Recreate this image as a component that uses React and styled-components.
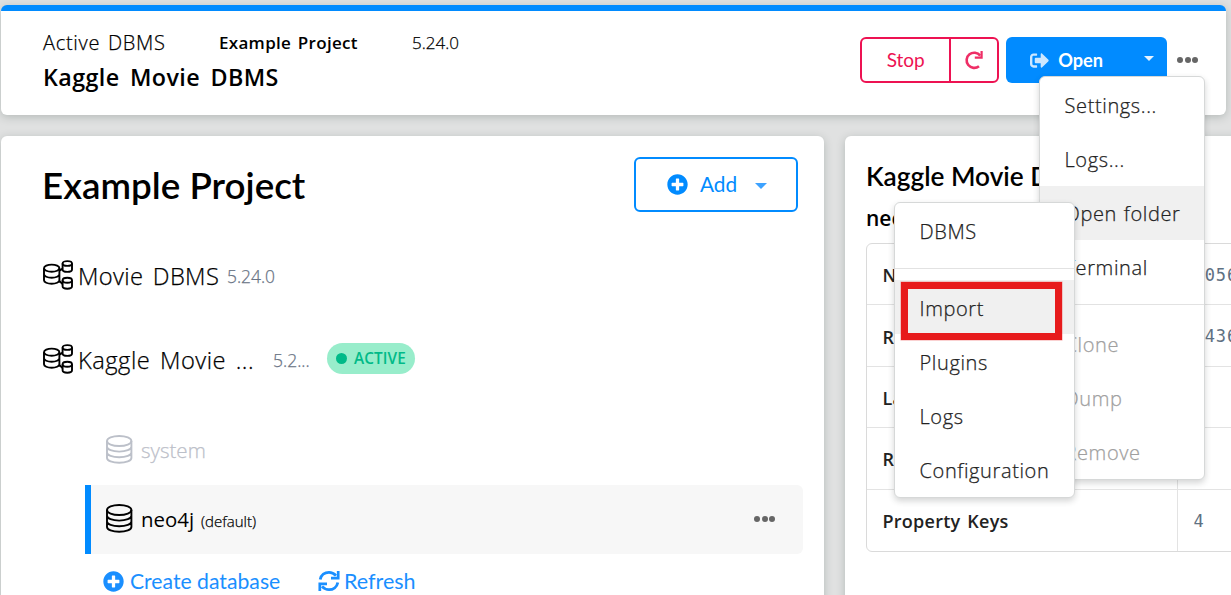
import React from "react";
import styled, { createGlobalStyle } from "styled-components";
import { FaPlusCircle, FaSignOutAlt } from "react-icons/fa";

const Global = createGlobalStyle`
  * { box-sizing: border-box; }
  body { margin: 0; background: #e0e1e1; overflow: hidden; font-family: "Open Sans", "Noto Sans", sans-serif; color: #000; }
`;

const Page = styled.div`
  position: relative;
  width: 1231px;
  height: 595px;
  padding: 5px 0 0 1px;
  overflow: hidden;
`;

const Text = styled.span`
  display: block;
  white-space: nowrap;
  font-family: ${(p) => (p.$lato ? '"Lato", sans-serif' : "inherit")};
  font-size: ${(p) => p.$size}px;
  font-weight: ${(p) => p.$weight || 300};
  -webkit-text-stroke: ${(p) => (p.$weight ? 0 : 0.25)}px currentColor;
  line-height: ${(p) => p.$lh || 30}px;
  letter-spacing: ${(p) => p.$ls || 0}px;
  word-spacing: ${(p) => p.$ws || 0}px;
  color: ${(p) => p.$color || "inherit"};
`;

const Header = styled.header`
  display: flex;
  justify-content: space-between;
  width: 1225px;
  height: 110px;
  padding: 22px 28px 0 42px;
  border-top: 6px solid #018bff;
  border-radius: 6px;
  background: #fff;
  box-shadow: 0 2px 8px rgba(50, 70, 65, 0.25);
`;

const Titles = styled.div`
  display: flex;
  flex-direction: column;
  gap: 5px;
  margin-top: -5px;
`;

const TitleRow = styled.div`
  display: grid;
  grid-template-columns: 176px 193px auto;
  align-items: center;
  height: 19px;
`;

const Actions = styled.div`
  display: flex;
  height: 46px;
  margin-top: 4px;
`;

const StopGroup = styled.div`
  display: flex;
  width: 139px;
  border: 2px solid #ed1252;
  border-radius: 6px;
  color: #ed1252;
`;

const StopButton = styled.div`
  display: flex;
  align-items: center;
  justify-content: center;
  width: ${(p) => p.$width}px;
  border-right: ${(p) => (p.$divided ? "2px solid #ed1252" : "0")};
`;

const OpenButton = styled.div`
  display: flex;
  align-items: center;
  width: 161px;
  margin-left: 7px;
  padding: 0 13px 0 24px;
  border-radius: 6px;
  background: #018bff;
  color: #fff;
  svg { opacity: 0.8; margin-right: 9px; }
`;

const Caret = styled.i`
  width: 0;
  height: 0;
  margin-left: auto;
  margin-top: ${(p) => p.$shift || 0}px;
  border: ${(p) => p.$size || 6}px solid transparent;
  border-top-color: ${(p) => p.$color};
  border-bottom: 0;
`;

const Dots = styled.div`
  display: flex;
  align-items: center;
  gap: 1.4px;
  margin-left: ${(p) => p.$left || 0}px;
  i { width: 6px; height: 6px; border-radius: 50%; background: #666; }
`;

const Columns = styled.main`
  display: flex;
  gap: 21px;
  margin-top: 21px;
`;

const Card = styled.section`
  flex: none;
  width: ${(p) => p.$width}px;
  height: 480px;
  padding: ${(p) => p.$pad};
  border-radius: 6px;
  background: #fff;
  box-shadow: 0 2px 8px rgba(50, 70, 65, 0.25);
`;

const ProjectHead = styled.div`
  display: flex;
  justify-content: space-between;
  height: 55px;
  margin-left: -1px;
`;

const AddButton = styled.div`
  display: flex;
  align-items: center;
  width: 164px;
  padding: 0 29px 1px 31px;
  border: 2px solid #018bff;
  border-radius: 6px;
  color: #018bff;
  svg { margin-right: 12px; }
`;

const DbmsRow = styled.div`
  display: flex;
  align-items: center;
  gap: 5px;
  height: 32px;
  margin-top: ${(p) => p.$top}px;
  svg { flex: none; }
`;

const DbmsName = styled.div`
  width: ${(p) => p.$width}px;
  padding-top: 2px;
`;

const Version = styled.div`
  width: ${(p) => p.$width}px;
  padding-top: 2px;
  color: #6a7485;
`;

const Badge = styled.div`
  display: flex;
  align-items: center;
  gap: 7px;
  width: 88px;
  height: 31px;
  margin-bottom: 2px;
  padding-left: 9px;
  border-radius: 16px;
  background: #98edcb;
  color: #00ba88;
  &::before { content: ""; width: 11px; height: 11px; border-radius: 50%; background: #00ba88; }
`;

const DatabaseRow = styled.div`
  display: flex;
  align-items: center;
  width: 718px;
  height: 69px;
  margin-left: 42px;
  margin-top: ${(p) => p.$top || 0}px;
  padding: 0 28px 1px 15px;
  border-left: 6px solid ${(p) => (p.$active ? "#018bff" : "transparent")};
  border-radius: 0 6px 6px 0;
  background: ${(p) => (p.$active ? "#f7f7f7" : "transparent")};
  color: ${(p) => (p.$active ? "#000" : "#bcc0c9")};
  svg { flex: none; margin: 0 8px 2px 0; }
`;

const Default = styled.div`
  margin: 4px auto 0 7px;
`;

const Links = styled.div`
  display: flex;
  align-items: center;
  height: 30px;
  margin: 12px 0 0 60px;
  color: #1a8fff;
`;

const Link = styled.div`
  display: flex;
  align-items: center;
  gap: ${(p) => p.$gap}px;
  width: ${(p) => p.$width}px;
`;

const DatabaseName = styled.div`
  height: 38px;
`;

const Table = styled.div`
  display: grid;
  grid-template-columns: 311px 1fr;
  width: 500px;
  margin-top: 9px;
  border: 1px solid #dadada;
  border-radius: 6px;
`;

const Cell = styled.div`
  display: flex;
  align-items: center;
  height: 61.4px;
  padding-left: 15.5px;
  padding-top: ${(p) => (p.$label ? 2 : 1)}px;
  border-bottom: ${(p) => (p.$last ? "0" : "1px solid #e3e3e3")};
  border-right: ${(p) => (p.$label ? "1px solid #e3e3e3" : "0")};
  color: ${(p) => (p.$label ? "#222" : "#5f7183")};
`;

const Value = styled.span`
  font: 400 17px/24px "DejaVu Sans Mono", monospace;
  letter-spacing: 0.9px;
`;

const Menu = styled.nav`
  position: absolute;
  left: ${(p) => p.$x}px;
  top: ${(p) => p.$y}px;
  width: ${(p) => p.$w}px;
  padding: 1px 0 ${(p) => p.$bottom || 0}px;
  border: 1px solid #d6d8d8;
  border-radius: 6px;
  background: #fff;
  box-shadow: 0 3px 6px rgba(40, 45, 45, 0.2);
`;

const Item = styled.div`
  display: flex;
  align-items: center;
  height: 54px;
  padding-left: 24.5px;
  padding-top: ${(p) => (p.$low ? 4 : 2)}px;
  background: ${(p) => (p.$hover ? "#f0f0f0" : "transparent")};
  color: ${(p) => (p.$disabled ? "#a0a0a0" : "#222")};
`;

const Separator = styled.div`
  height: ${(p) => p.$h}px;
  padding-top: 10px;
  &::before { content: ""; display: block; height: 1px; background: #e2e2e2; }
`;

const Highlight = styled.div`
  position: absolute;
  left: 901px;
  top: 282px;
  width: 161px;
  height: 58px;
  border: 7px solid #e71b1c;
  box-shadow: 0 0 0 0.5px rgba(231, 27, 28, 0.4);
`;

const ClusterIcon = () => (
  <svg width="30" height="30" viewBox="0 0 30 30" fill="none" stroke="#000" strokeWidth="1.9">
    <ellipse cx="8.7" cy="8.2" rx="7.7" ry="3.6" />
    <path d="M1 8.2v12c0 2 3.4 3.6 7.7 3.6s7.7-1.6 7.7-3.6v-12M1 14.2c0 2 3.4 3.6 7.7 3.6s7.7-1.6 7.7-3.6M16.4 11l3.2-2.6M16.4 21l3.2 3" />
    <ellipse cx="24.3" cy="3.5" rx="4.7" ry="2.4" />
    <path d="M19.6 3.5v6c0 1.4 2.1 2.4 4.7 2.4s4.7-1 4.7-2.4v-6" />
    <ellipse cx="24.3" cy="20.3" rx="4.7" ry="2.5" />
    <path d="M19.6 20.3v6c0 1.4 2.1 2.4 4.7 2.4s4.7-1 4.7-2.4v-6" />
  </svg>
);

const DatabaseIcon = () => (
  <svg width="27" height="29" viewBox="0 0 27 29" fill="none" stroke="currentColor" strokeWidth="1.9">
    <ellipse cx="13.2" cy="6" rx="12.2" ry="5" />
    <path d="M1 6v17c0 2.7 5.4 4.8 12.2 4.8s12.2-2.1 12.2-4.8V6M1 11.8c0 2.7 5.4 4.8 12.2 4.8s12.2-2.1 12.2-4.8M1 17.4c0 2.7 5.4 4.8 12.2 4.8s12.2-2.1 12.2-4.8" />
  </svg>
);

const RestartIcon = () => (
  <svg width="20" height="20" viewBox="0 0 20 20" fill="none" stroke="#ed1252" strokeWidth="2.6" opacity="0.88">
    <path d="M15 16.2A7.6 7.6 0 1 1 16.2 5.6" />
    <path d="M17.6 1v6.6h-6.8" strokeWidth="2.2" />
  </svg>
);

const RefreshIcon = () => (
  <svg width="22" height="22" viewBox="0 0 22 22" fill="none" stroke="currentColor" strokeWidth="2.8">
    <path d="M2.2 9.5C3 5 6.8 2.3 11 2.3c2.6 0 5 1.1 7 3.3" />
    <path d="M19.8 12.5C19 17 15.2 19.7 11 19.7c-2.6 0-5-1.1-7-3.3" />
    <path d="M20.2 1v7.2H13M1.8 21v-7.2H9" strokeWidth="2.7" />
  </svg>
);

const More = ({ left }) => (
  <Dots $left={left}><i /><i /><i /></Dots>
);

const stats = [
  ["Nodes", "9056"],
  ["Relationships", "4436"],
  ["Labels", "2"],
  ["Relationship Types", "1"],
  ["Property Keys", "4"],
];

const MenuItem = ({ children, ...rest }) => (
  <Item {...rest}>
    <Text $size={20} $ls={0.62} $ws={1}>{children}</Text>
  </Item>
);

export default function App() {
  return (
    <Page>
      <Global />
      <Header>
        <Titles>
          <TitleRow>
            <Text $size={20} $ls={0.7} $ws={2}>Active DBMS</Text>
            <Text $size={17} $weight={650} $ws={2} $ls={0.3}>Example Project</Text>
            <Text $size={17}>5.24.0</Text>
          </TitleRow>
          <Text $size={23.3} $weight={650} $lh={50} $ws={4} $ls={0.4}>Kaggle Movie DBMS</Text>
        </Titles>
        <Actions>
          <StopGroup>
            <StopButton $width={89} $divided><Text $lato $size={19} $weight={400}>Stop</Text></StopButton>
            <StopButton $width={46}><RestartIcon /></StopButton>
          </StopGroup>
          <OpenButton>
            <FaSignOutAlt size={19} />
            <Text $lato $size={18.2} $weight={700}>Open</Text>
            <Caret $color="#e6f3ff" $shift={-3} $size={5} />
          </OpenButton>
          <More left={10} />
        </Actions>
      </Header>
      <Columns>
        <Card $width={823} $pad="21px 26px 0 42px">
          <ProjectHead>
            <Text $lato $size={36.8} $weight={600} $lh={57}>Example Project</Text>
            <AddButton>
              <FaPlusCircle size={21} />
              <Text $lato $size={20.8} $weight={400}>Add</Text>
              <Caret $color="#3da2ff" $shift={3} />
            </AddButton>
          </ProjectHead>
          <DbmsRow $top={47}>
            <ClusterIcon />
            <DbmsName $width={144}><Text $size={23.7} $ws={3} $ls={0.35}>Movie DBMS</Text></DbmsName>
            <Version $width={60}><Text $size={17.4}>5.24.0</Text></Version>
          </DbmsRow>
          <DbmsRow $top={52}>
            <ClusterIcon />
            <DbmsName $width={190}><Text $size={23.7} $ws={3} $ls={0.5}>Kaggle Movie ...</Text></DbmsName>
            <Version $width={49}><Text $size={17.5}>5.2...</Text></Version>
            <Badge><Text $size={15.3} $weight={650} $ls={0.1}>ACTIVE</Text></Badge>
          </DbmsRow>
          <DatabaseRow $top={41}><DatabaseIcon /><Text $size={20.5}>system</Text></DatabaseRow>
          <DatabaseRow $active>
            <DatabaseIcon />
            <Text $size={20.4} $weight={400}>neo4j</Text>
            <Default><Text $size={15}>(default)</Text></Default>
            <More />
          </DatabaseRow>
          <Links>
            <Link $width={215} $gap={6}><FaPlusCircle size={21} /><Text $lato $size={21.2} $weight={400}>Create database</Text></Link>
            <Link $width={110} $gap={4}><RefreshIcon /><Text $lato $size={21.5} $weight={400}>Refresh</Text></Link>
          </Links>
        </Card>
        <Card $width={430} $pad="20px 0 0 21px">
          <Text $lato $size={26.2} $weight={600} $lh={40}>Kaggle Movie DBMS</Text>
          <DatabaseName><Text $size={21} $weight={650} $lh={44}>neo4j</Text></DatabaseName>
          <Table>
            {stats.map(([label, value], i) => (
              <React.Fragment key={label}>
                <Cell $label $last={i === 4}><Text $size={18} $weight={650} $ws={2} $ls={0.25}>{label}</Text></Cell>
                <Cell $last={i === 4}><Value>{value}</Value></Cell>
              </React.Fragment>
            ))}
          </Table>
        </Card>
      </Columns>
      <Menu $x={1039} $y={76} $w={166}>
        <MenuItem>Settings...</MenuItem>
        <MenuItem>Logs...</MenuItem>
        <MenuItem $hover>Open folder</MenuItem>
        <MenuItem>Terminal</MenuItem>
        <Separator $h={23} />
        <MenuItem $disabled>Clone</MenuItem>
        <MenuItem $disabled>Dump</MenuItem>
        <MenuItem $disabled>Remove</MenuItem>
      </Menu>
      <Menu $x={894} $y={202} $w={181} $bottom={1}>
        <MenuItem>DBMS</MenuItem>
        <Separator $h={22} />
        <MenuItem $low $hover>Import</MenuItem>
        <MenuItem $low>Plugins</MenuItem>
        <MenuItem $low>Logs</MenuItem>
        <MenuItem $low>Configuration</MenuItem>
      </Menu>
      <Highlight />
    </Page>
  );
}
